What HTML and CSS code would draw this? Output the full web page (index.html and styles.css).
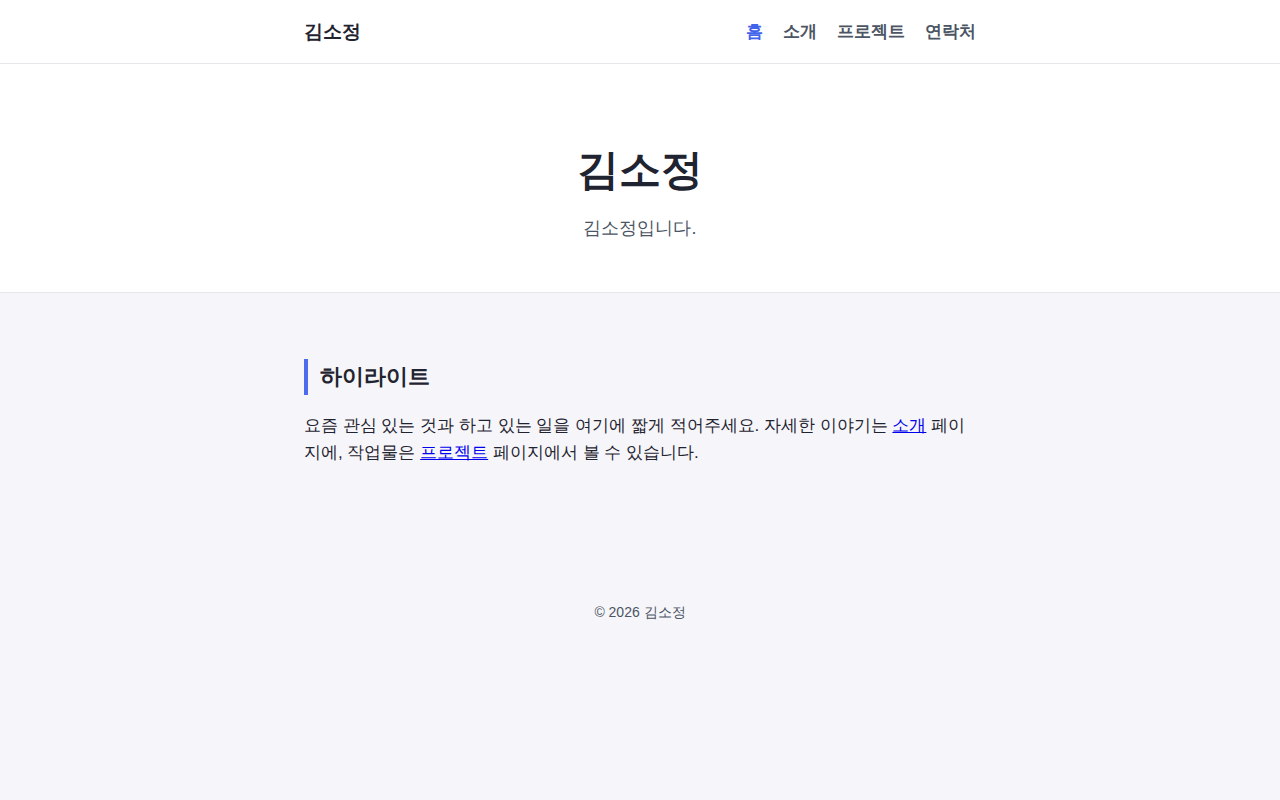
FILE: index.html
```html
<!DOCTYPE html>
<html lang="ko">
<head>
    <meta charset="UTF-8">
    <meta name="viewport" content="width=device-width, initial-scale=1.0">
    <title>김소정</title>
    <link rel="stylesheet" href="styles.css">
</head>
<body>
    <header class="site-header">
        <div class="container header-inner">
            <a class="brand" href="#">김소정</a>
            <nav class="nav">
                <a class="active" href="#">홈</a>
                <a href="#">소개</a>
                <a href="#">프로젝트</a>
                <a href="#">연락처</a>
            </nav>
        </div>
    </header>

    <section class="hero">
        <h1>김소정</h1>
        <p>김소정입니다.</p>
    </section>

    <main class="content">
        <div class="container">
            <h2 class="section-title">하이라이트</h2>
            <p>요즘 관심 있는 것과 하고 있는 일을 여기에 짧게 적어주세요. 자세한 이야기는 <a href="#">소개</a> 페이지에, 작업물은 <a href="#">프로젝트</a> 페이지에서 볼 수 있습니다.</p>
        </div>
        <footer class="footer">© 2026 김소정</footer>
    </main>
</body>
</html>
```

FILE: styles.css
```css
html, body {
    height: 100%;
}
body {
    margin: 0;
    font-family: sans-serif;
    color: #1f2430;
    background-color: #f6f6fa;
    display: flex;
    flex-direction: column;
}
.container {
    max-width: 672px;
    margin: 0 auto;
}
.site-header {
    background-color: #fff;
    border-bottom: 1px solid #e5e7eb;
}
.header-inner {
    height: 63px;
    display: flex;
    align-items: center;
    justify-content: space-between;
}
.brand {
    font-size: 19px;
    font-weight: bold;
    color: #1f2430;
    text-decoration: none;
}
.nav {
    display: flex;
    gap: 20px;
}
.nav a {
    font-size: 17px;
    font-weight: bold;
    color: #4b5563;
    text-decoration: none;
}
.nav a.active {
    color: #4263eb;
}
.hero {
    background-color: #fff;
    border-bottom: 1px solid #e5e7eb;
    text-align: center;
    padding: 80px 0 53px;
}
.hero h1 {
    margin: 0;
    font-size: 42px;
    line-height: 52px;
    color: #1f2430;
}
.hero p {
    margin: 22px 0 0;
    font-size: 18px;
    line-height: 21px;
    color: #4b5563;
}
.content {
    flex: 1;
    padding-top: 66px;
}
.section-title {
    margin: 0 0 17px;
    padding-left: 12px;
    border-left: 4px solid #4f6bed;
    font-size: 22px;
    line-height: 36px;
}
.content p {
    margin: 0;
    font-size: 17px;
    line-height: 27px;
}
.footer {
    margin-top: 138px;
    text-align: center;
    font-size: 14px;
    color: #4b5563;
}
```
